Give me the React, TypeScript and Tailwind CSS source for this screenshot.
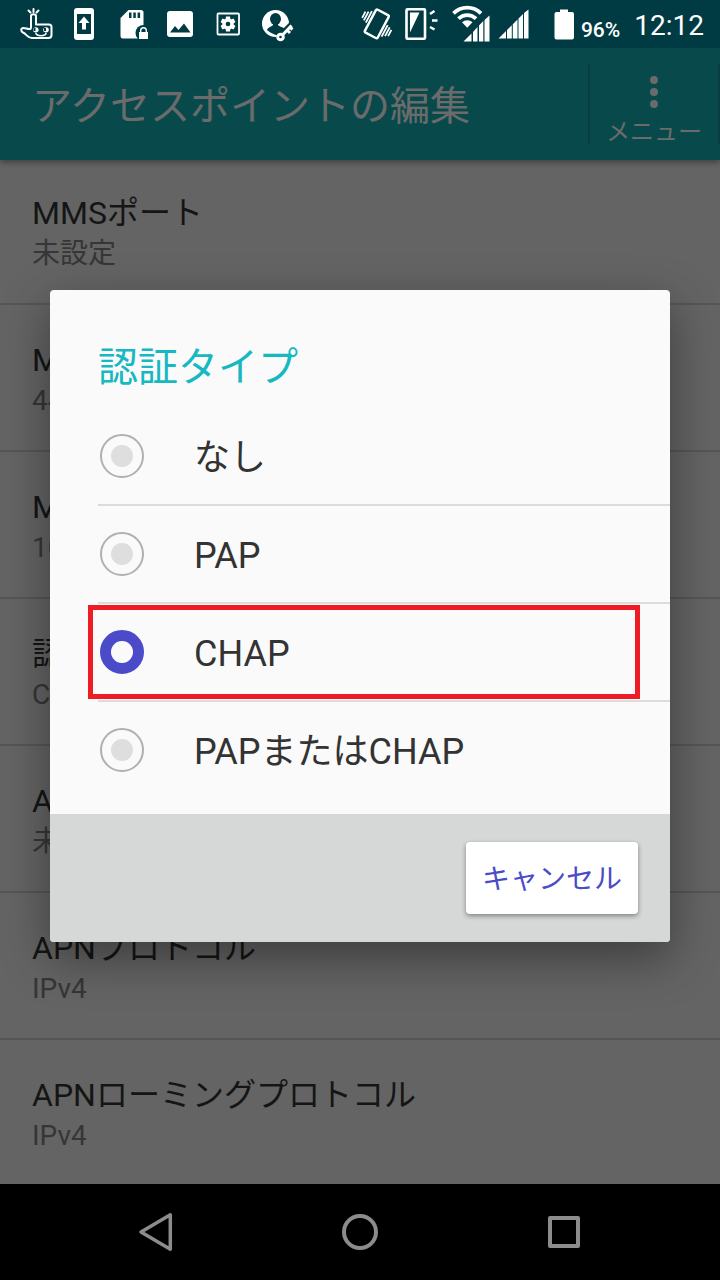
import { useState, type ReactNode } from "react";

interface Setting {
  title: string;
  value: string;
}

const settings: Setting[] = [
  { title: "MMSポート", value: "未設定" },
  { title: "MCC", value: "440" },
  { title: "MNC", value: "10" },
  { title: "認証タイプ", value: "CHAP" },
  { title: "APNタイプ", value: "未設定" },
  { title: "APNプロトコル", value: "IPv4" },
  { title: "APNローミングプロトコル", value: "IPv4" },
];

const authTypes = ["なし", "PAP", "CHAP", "PAPまたはCHAP"];

function Glyph({ width = 48, children }: { width?: number; children: ReactNode }) {
  return (
    <svg
      width={width}
      height={48}
      viewBox={`0 0 ${width} 48`}
      fill="white"
      className="shrink-0"
      aria-hidden="true"
    >
      {children}
    </svg>
  );
}

function StatusBar() {
  return (
    <div className="flex h-12 shrink-0 items-center justify-between bg-[#003b43] pr-4 pl-3 text-white">

      {/* Notifications */}

      <div className="flex">

        <Glyph>
          <g fill="none" stroke="white" strokeWidth="2" strokeLinecap="round" strokeLinejoin="round">
            <path d="M21.500 9v3M16.500 10.500l2 2M26.500 10.500l-2 2" />
            <path d="M19 28V16c0-2.500 5-2.500 5 0v8.500h13c1.500 0 2.500 1 2.500 2.500v8c0 2-1 3-3 3H20c-4.500 0-5.500-4-9-5.500-2.500-1.200-2.300-4.500.5-4.500 2.500 0 4 1.500 7 1" />
            <path d="M24 33.500c1 3 9 3 10 0" strokeWidth="1.600" />
          </g>
          <ellipse cx="23.800" cy="29.800" rx="2.800" ry="2.600" />
          <ellipse cx="34" cy="29.800" rx="2.800" ry="2.600" />
          <path fill="#003b43" d="M21.500 28h2v3h-2zM32 28h2v3h-2z" />
        </Glyph>

        <Glyph>
          <path fillRule="evenodd" d="M17 8h14a3 3 0 0 1 3 3v26a3 3 0 0 1-3 3H17a3 3 0 0 1-3-3V11a3 3 0 0 1 3-3zM17 14v20h14V14z" />
          <path d="M24 16.500l5.500 6.500h-3.500v6.500h-4V23h-3.500z" />
        </Glyph>

        <Glyph>
          <path d="M20.500 10H33a2.500 2.500 0 0 1 2.500 2.500V36a2.500 2.500 0 0 1-2.500 2.500H15A2.500 2.500 0 0 1 12.500 36V18z" />
          <path fill="#003b43" d="M21 12.500h2.500v5.500H21zM25.300 12.500h2.500v5.500h-2.500zM29.600 12.500h2.500v5.500h-2.500z" />
          <circle cx="35.500" cy="33" r="8" fill="#003b43" />
          <path d="M31 32h9v7h-9z" />
          <path d="M32.700 32v-1.500a2.800 2.800 0 0 1 5.600 0V32" fill="none" stroke="white" strokeWidth="1.400" />
        </Glyph>

        <Glyph>
          <rect x="11" y="11" width="26" height="26" rx="3" />
          <path fill="#003b43" d="M14 32.500l5-6.500 3.500 4 5.500-6.500 6.500 9z" />
        </Glyph>

        <Glyph>
          <rect x="13.500" y="13.500" width="21.500" height="21" rx="1" fill="none" stroke="white" strokeWidth="1.800" />
          <g transform="translate(24 24)">
            <circle r="5.500" />
            <path d="M-2-7.500h4l.7 4h-5.400zM-2 7.500h4l.7-4h-5.400z" />
            <path d="M-2-7.500h4l.7 4h-5.400zM-2 7.500h4l.7-4h-5.400z" transform="rotate(60)" />
            <path d="M-2-7.500h4l.7 4h-5.400zM-2 7.500h4l.7-4h-5.400z" transform="rotate(120)" />
            <circle r="2.300" fill="#003b43" />
          </g>
        </Glyph>

        <Glyph>
          <circle cx="23.500" cy="23.500" r="13.500" />
          <g fill="#003b43">
            <ellipse cx="23.500" cy="19" rx="5.500" ry="6" />
            <path d="M21 23h5v2c2 2 5 2 7 4l-6 7c-3-1-9-3-12-6 1-3 4-3 6-5z" />
          </g>
          <path d="M28.500 37L39 26.500" stroke="#003b43" strokeWidth="8" strokeLinecap="round" />
          <g fill="none" stroke="white" strokeWidth="3">
            <circle cx="28.500" cy="37" r="2.800" />
            <path d="M30.500 35L39.500 25.500M34.500 29.500l3.500 3.500M37 26.500l3.500 3" />
          </g>
        </Glyph>

      </div>

      {/* System state */}

      <div className="flex items-center">

        <Glyph>
          <g transform="rotate(28 24 24)" fill="none" stroke="white">
            <rect x="16.500" y="11" width="14.500" height="26" rx="1.500" strokeWidth="2.400" />
            <path strokeWidth="1.800" d="M13.500 15v13M10.700 17v10M8 18.500v7M34 20v13M36.800 21v10M39.500 22.500v7" />
          </g>
        </Glyph>

        <Glyph>
          <rect x="5.500" y="9.300" width="18.500" height="29.500" rx="1" fill="none" stroke="white" strokeWidth="2.600" />
          <path d="M9 12.500h9.500L9 32.500z" />
          <path d="M29 14l4.500-3M31 20.500h5.500M29 27l4.500 2.500" stroke="white" strokeWidth="2.500" />
        </Glyph>

        <Glyph width={44}>
          <g fill="none" stroke="white" strokeWidth="3.800">
            <path d="M4.500 13.300a19.500 19.500 0 0 1 27.500 0" />
            <path d="M9.500 18.700a12.300 12.300 0 0 1 17.500 0" />
          </g>
          <path d="M13 22.300a7.600 7.600 0 0 1 10.500 0L18.200 27.800z" />
          <path d="M14.500 41.500l8-8v8zM24 32l4.500-5v14.500H24zM30 25.500l4.300-4.500v20.500H30zM35.500 20l5-4.500v26h-5z" />
        </Glyph>

        <Glyph width={44}>
          <path d="M5.500 38.500l7.500-7.500v7.500zM14 30l4.800-4.800v13.300H14zM19.800 24.300l4.700-4.700v18.900h-4.700zM25.500 18.600l4.500-4.500v24.400h-4.500zM31 13l4.500-3.500v29H31z" />
        </Glyph>

        <Glyph width={44}>
          <path d="M23 9.500h8V12h4a2 2 0 0 1 2 2v23.500a2 2 0 0 1-2 2H19.500a2 2 0 0 1-2-2V14a2 2 0 0 1 2-2H23z" />
        </Glyph>

        <span className="mt-3 text-[21px] leading-6 font-medium">96%</span>
        <span className="mt-1 ml-3.5 text-[28px] leading-8">12:12</span>

      </div>

    </div>
  );
}

function AppBar() {
  return (
    <header className="relative z-10 flex h-28 shrink-0 items-center justify-between bg-[#084a4b] pl-8 text-[#6b6b6b] shadow-[0_2px_6px_rgba(0,0,0,0.4)]">

      <h1 className="pt-1.5 text-[40px] leading-[56px]">アクセスポイントの編集</h1>

      <button
        type="button"
        className="flex h-20 w-[132px] flex-col items-center border-x-2 border-[#07403f] pt-3"
      >
        <svg
          width="8"
          height="32"
          viewBox="0 0 8 32"
          fill="currentColor"
          className="shrink-0"
          aria-hidden="true"
        >
          <circle cx="4" cy="4" r="4" />
          <circle cx="4" cy="16" r="4" />
          <circle cx="4" cy="28" r="4" />
        </svg>
        <span className="mt-3 text-2xl leading-6">メニュー</span>
      </button>

    </header>
  );
}

function SettingsList() {
  return (
    <ul className="-mt-0.5">
      {settings.map((item) => (
        <li
          key={item.title}
          className="h-[147px] border-b-2 border-[#565656] px-8 pt-[33px]"
        >
          <h2 className="text-[32px] leading-[44px] text-[#151515]">{item.title}</h2>
          <p className="text-[28px] leading-[38px] text-[#363636]">{item.value}</p>
        </li>
      ))}
    </ul>
  );
}

function AuthTypeDialog() {
  const [selected, setSelected] = useState("CHAP");

  return (
    <div
      role="dialog"
      aria-labelledby="auth-title"
      className="w-full overflow-hidden rounded bg-[#fafafa] shadow-[0_16px_48px_rgba(0,0,0,0.4)]"
    >

      <h2 id="auth-title" className="pt-[50px] pb-3 pl-12 text-[40px] leading-[56px] text-[#16b8c1]">
        認証タイプ
      </h2>

      <div className="pb-4 pl-12">
        {authTypes.map((type) => (
          <label
            key={type}
            className="relative flex h-[98px] items-center gap-[50px] border-b-2 border-[#dcdcdc] pl-0.5 last:h-24 last:border-b-0"
          >
            <input
              type="radio"
              name="auth-type"
              value={type}
              checked={selected === type}
              onChange={() => setSelected(type)}
              className="size-11 shrink-0 appearance-none rounded-full border-2 border-[#b0b0b0] bg-[#dedede] bg-clip-content p-[9px] checked:border-[11px] checked:border-[#4b4bca] checked:bg-transparent checked:p-0"
            />
            <span className="pt-1 text-4xl leading-[52px] text-[#333333]">{type}</span>

            {selected === type && (
              <span className="pointer-events-none absolute top-px right-[30px] bottom-px -left-2.5 border-5 border-[#ee1c24]" />
            )}
          </label>
        ))}
      </div>

      <div className="flex justify-end bg-[#d6d8d7] px-8 py-7">
        <button
          type="button"
          className="h-[72px] rounded bg-white px-4 pt-1 text-[28px] text-[#4b4bca] shadow-[0_2px_5px_rgba(0,0,0,0.4)]"
        >
          キャンセル
        </button>
      </div>

    </div>
  );
}

function NavigationBar() {
  return (
    <nav className="grid h-24 shrink-0 grid-cols-3 bg-black px-[54px]">

      <button type="button" aria-label="戻る" className="flex items-center justify-center">
        <svg width="40" height="44" viewBox="0 0 40 44" fill="none" stroke="#8c8c8c" strokeWidth="3.500" strokeLinejoin="round">
          <path d="M34.300 4.800v34.400L5 22z" />
        </svg>
      </button>

      <button type="button" aria-label="ホーム" className="flex items-center justify-center">
        <svg width="40" height="40" viewBox="0 0 40 40" fill="none" stroke="#8c8c8c" strokeWidth="4">
          <circle cx="20" cy="20" r="16" />
        </svg>
      </button>

      <button type="button" aria-label="履歴" className="flex items-center justify-center">
        <svg width="40" height="40" viewBox="0 0 40 40" fill="none" stroke="#8c8c8c" strokeWidth="4" strokeLinejoin="round">
          <rect x="6" y="6" width="28" height="28" />
        </svg>
      </button>

    </nav>
  );
}

export default function App() {
  return (
    <div
      lang="ja"
      className="flex h-screen flex-col bg-[#646464] font-['Roboto','Noto_Sans_CJK_JP',sans-serif]"
    >
      <StatusBar />

      <main className="relative flex min-h-0 flex-1 flex-col overflow-hidden">
        <AppBar />
        <SettingsList />

        <div className="absolute inset-0 z-20 flex items-center justify-center px-[50px]">
          <AuthTypeDialog />
        </div>
      </main>

      <NavigationBar />
    </div>
  );
}
